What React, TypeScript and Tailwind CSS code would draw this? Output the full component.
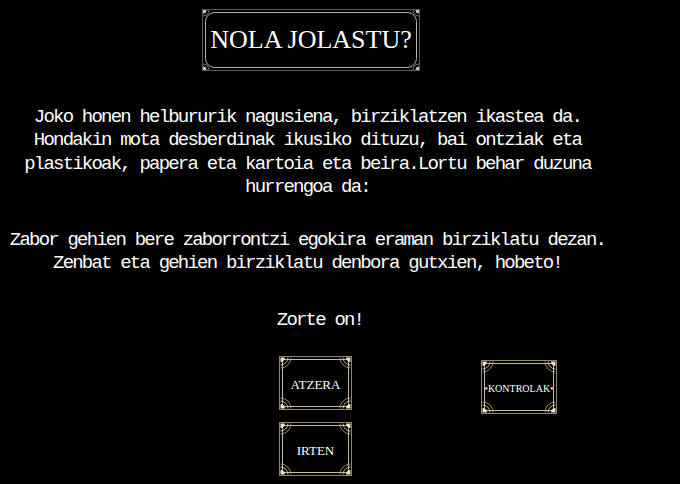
import type { ReactNode } from "react";

type Corner = { x: number; y: number; sx: number; sy: number };

function corners(w: number, h: number, inset: number): Corner[] {
  return [
    { x: inset, y: inset, sx: 1, sy: 1 },
    { x: w - inset, y: inset, sx: -1, sy: 1 },
    { x: inset, y: h - inset, sx: 1, sy: -1 },
    { x: w - inset, y: h - inset, sx: -1, sy: -1 },
  ];
}

function arc(c: Corner, r: number) {
  const sweep = c.sx * c.sy > 0 ? 1 : 0;
  return `M ${c.x + c.sx * r} ${c.y} A ${r} ${r} 0 0 ${sweep} ${c.x} ${c.y + c.sy * r}`;
}

function fan(c: Corner, r: number) {
  const sweep = c.sx * c.sy > 0 ? 1 : 0;
  return `M ${c.x} ${c.y} L ${c.x + c.sx * r} ${c.y} A ${r} ${r} 0 0 ${sweep} ${c.x} ${c.y + c.sy * r} Z`;
}

// ornate button frame
function OrnateFrame({ w, h }: { w: number; h: number }) {
  const cs = corners(w, h, 1.5);
  return (
    <svg width={w} height={h} className="absolute inset-0" fill="none">
      <rect x={0.5} y={0.5} width={w - 1} height={h - 1} stroke="#8f8572" strokeWidth={1} />
      <rect x={3.5} y={3.5} width={w - 7} height={h - 7} stroke="#c8b99b" strokeWidth={1} />
      {cs.map((c, i) => (
        <g key={i}>
          <path d={fan(c, 4.5)} fill="#f1e3c8" />
          <path d={arc(c, 7.5)} stroke="#d9c9a9" strokeWidth={0.9} />
          <path d={arc(c, 10.5)} stroke="#b9aa8c" strokeWidth={0.8} />
        </g>
      ))}
    </svg>
  );
}

// title frame: thin outer line + rounded inner line
function TitleFrame({ w, h }: { w: number; h: number }) {
  const cs = corners(w, h, 1);
  return (
    <svg width={w} height={h} className="absolute inset-0" fill="none">
      <rect x={0.5} y={0.5} width={w - 1} height={h - 1} stroke="#5b564e" strokeWidth={1} />
      <rect x={3.5} y={3.5} width={w - 7} height={h - 7} rx={9} stroke="#b9b1a2" strokeWidth={1} />
      {cs.map((c, i) => (
        <g key={i}>
          <path d={fan(c, 3.5)} fill="#cfc5b2" />
          <path d={arc(c, 6)} stroke="#a59c8c" strokeWidth={0.8} />
        </g>
      ))}
    </svg>
  );
}

function FrameButton({
  w,
  h,
  className,
  children,
}: {
  w: number;
  h: number;
  className: string;
  children: ReactNode;
}) {
  return (
    <div className={`relative flex items-center justify-center bg-black pt-[3px] ${className}`}>
      <OrnateFrame w={w} h={h} />
      <span className="relative font-['Liberation_Serif',serif] text-white">{children}</span>
    </div>
  );
}

export default function App() {
  return (
    <div className="w-[680px] h-[484px] overflow-hidden bg-black text-white">
      {/* Title */}
      <div className="pt-[9px] pl-[202px]">
        <div className="relative flex h-[62px] w-[218px] items-center justify-center">
          <TitleFrame w={218} h={62} />
          <h1 className="relative font-['Liberation_Serif',serif] text-[26px] leading-none text-white">
            NOLA JOLASTU?
          </h1>
        </div>
      </div>

      {/* Instructions */}
      <div className="font-['Liberation_Mono',monospace] text-[19px] leading-[23.3px] tracking-[-1.8px] text-white">
        <p className="mt-[35px] w-[615px] text-center">
          Joko honen helbururik nagusiena, birziklatzen ikastea da.
          <br />
          Hondakin mota desberdinak ikusiko dituzu, bai ontziak eta
          <br />
          plastikoak, papera eta kartoia eta beira.Lortu behar duzuna
          <br />
          hurrengoa da:
        </p>
        <p className="mt-[30px] w-[615px] text-center">
          Zabor gehien bere zaborrontzi egokira eraman birziklatu dezan.
          <br />
          Zenbat eta gehien birziklatu denbora gutxien, hobeto!
        </p>
        <p className="mt-[33px] w-[640px] text-center">Zorte on!</p>
      </div>

      {/* Buttons */}
      <div className="mt-[24px] flex pl-[279px]">
        <div className="flex flex-col gap-[12px]">
          <FrameButton w={73} h={54} className="h-[54px] w-[73px] text-[13px]">
            ATZERA
          </FrameButton>
          <FrameButton w={73} h={54} className="h-[54px] w-[73px] text-[13px]">
            IRTEN
          </FrameButton>
        </div>
        <FrameButton w={76} h={54} className="ml-[129px] mt-[4px] h-[54px] w-[76px] text-[10px]">
          <span className="text-[#e9dcc2]">•</span>KONTROLAK<span className="text-[#e9dcc2]">•</span>
        </FrameButton>
      </div>
    </div>
  );
}
